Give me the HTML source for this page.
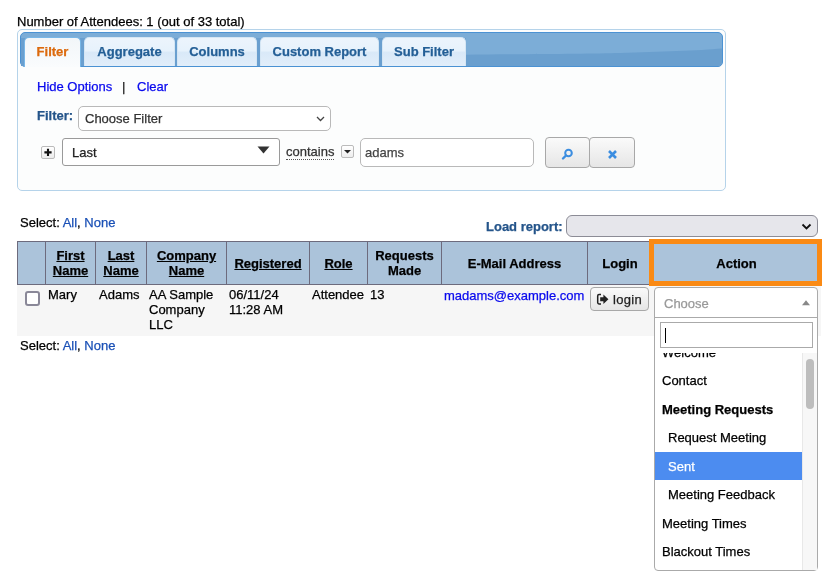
<!DOCTYPE html>
<html><head><meta charset="utf-8">
<style>
*{box-sizing:border-box}
html,body{margin:0;padding:0;background:#fff;width:839px;height:588px;overflow:hidden}
body{font-family:"Liberation Sans",sans-serif;font-size:13px;color:#000;position:relative;-webkit-text-stroke:0.25px currentColor}
.a{position:absolute}
.t{position:absolute;line-height:15px;white-space:nowrap}
.b{font-weight:bold}
/* widget */
#panel{left:17px;top:29px;width:709px;height:162px;border:1px solid #b5d3ea;border-radius:5px;background:#fcfdfd}
#hdr{left:20px;top:32px;width:703px;height:35px;border:1px solid #4b92d3;border-radius:5px;overflow:hidden;
 background:#7cadd7}
.tab{position:absolute;top:37px;height:29px;border:1px solid #d5e6f4;border-bottom:0;border-radius:5px 5px 0 0;
 background:linear-gradient(#ecf4fc 0%,#e7f2fc 45%,#d9e9f8 52%,#e2eefa 100%);color:#245f96;font-weight:bold;text-align:center;line-height:15px;padding-top:6px;
 box-shadow:inset 0 0 0 0 #fff}
.tab.act{background:#f5f8f9;border-color:#79b7e7;color:#dc6a0c;height:30px;background:linear-gradient(#f2f6f9,#fafcfd)}
a,.lnk{color:#0a0aee;text-decoration:none}
.lbl{color:#24548a;font-weight:bold}
.sel{position:absolute;border:1px solid #b9b9b9;border-radius:5px;background:#fff}
.btn{position:absolute;border:1px solid #a8a8a8;border-radius:4px;background:linear-gradient(#fafafa,#e6e6e6)}
/* table */
#th{left:17px;top:241px;width:804px;height:44px;background:#abc3da;border:1px solid #6d6b7d}
.vl{position:absolute;top:241px;width:1px;height:44px;background:#6d6b7d}
.hc{position:absolute;font-weight:bold;text-align:center;line-height:15px;white-space:nowrap}
.hc u{text-decoration:underline}
#row{left:17px;top:285px;width:804px;height:51px;background:#f6f6f6}
</style></head><body><div id="wrap" style="position:absolute;left:0;top:0;width:839px;height:588px;background:#fff;will-change:transform">

<div class="t" style="left:17px;top:14px">Number of Attendees: 1 (out of 33 total)</div>

<div id="panel" class="a"></div>
<div id="hdr" class="a"><svg style="position:absolute;left:-1px;top:-1px" width="703" height="35" viewBox="0 0 703 35"><path d="M0 23.5 L446 22.7 C520 22 570 21.8 600 21 C640 20 680 18.5 703 16.5 V35 H0 Z" fill="#6a9fce"/></svg></div>
<div class="a" style="left:21px;top:38px;width:445px;height:28px;background:#6a9fcf"></div>
<div class="tab act" style="left:24px;width:57px">Filter</div>
<div class="tab" style="left:84px;width:91px">Aggregate</div>
<div class="tab" style="left:177px;width:80px">Columns</div>
<div class="tab" style="left:260px;width:119px">Custom Report</div>
<div class="tab" style="left:382px;width:84px">Sub Filter</div>

<div class="t" style="left:37px;top:79px"><span class="lnk">Hide Options</span></div>
<div class="t" style="left:122px;top:79px;color:#222">|</div>
<div class="t" style="left:137px;top:79px"><span class="lnk">Clear</span></div>

<div class="t lbl" style="left:37px;top:108px">Filter:</div>
<div class="sel" style="left:78px;top:106px;width:253px;height:25px"></div>
<div class="t" style="left:85px;top:111px;color:#333">Choose Filter</div>
<svg class="a" style="left:316px;top:116px" width="9" height="6" viewBox="0 0 9 6"><path d="M1 1 L4.5 4.5 L8 1" fill="none" stroke="#444" stroke-width="1.3"/></svg>

<div class="a" style="left:41px;top:146px;width:14px;height:13px;border:1px solid #bbb;border-radius:2px;background:linear-gradient(#fff,#ececec)"></div>
<svg class="a" style="left:41px;top:146px" width="14" height="13" viewBox="0 0 14 13"><path d="M7 2.8 V10 M3.4 6.4 H10.6" stroke="#111" stroke-width="2.1"/></svg>

<div class="sel" style="left:62px;top:138px;width:218px;height:28px;border-radius:3px;border-color:#9a9a9a"></div>
<div class="t" style="left:72px;top:145px;color:#222">Last</div>
<svg class="a" style="left:257px;top:146px" width="13" height="8" viewBox="0 0 13 8"><path d="M0.5 0.5 H12.5 L6.5 7.5 Z" fill="#333"/></svg>

<div class="t" style="left:286px;top:144px;color:#333">contains</div>
<div class="a" style="left:286px;top:159px;width:48px;height:0;border-top:1px dotted #555"></div>
<div class="a" style="left:341px;top:145px;width:13px;height:13px;border:1px solid #bbb;border-radius:2px;background:linear-gradient(#fff,#eee)"></div>
<svg class="a" style="left:341px;top:145px" width="13" height="13" viewBox="0 0 13 13"><path d="M3 5 H10 L6.5 8.5 Z" fill="#222"/></svg>

<div class="sel" style="left:360px;top:138px;width:174px;height:29px;border-radius:5px"></div>
<div class="t" style="left:365px;top:145px;color:#444">adams</div>

<div class="btn" style="left:545px;top:137px;width:45px;height:31px"></div>
<div class="btn" style="left:589px;top:137px;width:46px;height:31px"></div>
<svg class="a" style="left:560px;top:147px" width="14" height="14" viewBox="0 0 14 14"><circle cx="8.5" cy="6" r="3.3" fill="none" stroke="#3b8de0" stroke-width="2"/><path d="M6 8.5 L3 11.5" stroke="#3b8de0" stroke-width="2.4" stroke-linecap="round"/></svg>
<svg class="a" style="left:606px;top:148px" width="13" height="13" viewBox="0 0 13 13"><path d="M3 3 L10 10 M10 3 L3 10" stroke="#3b8de0" stroke-width="2.6"/></svg>

<div class="t" style="left:20px;top:215px">Select: <span style="color:#1a50b6">All</span>, <span style="color:#1a50b6">None</span></div>

<div class="t lbl" style="left:486px;top:219px">Load report:</div>
<div class="sel" style="left:566px;top:215px;width:252px;height:22px;background:#e6e6eb;border-color:#8c8c96;border-radius:6px"></div>
<svg class="a" style="left:801px;top:223px" width="11" height="8" viewBox="0 0 11 8"><path d="M1.5 1.5 L5.5 5.5 L9.5 1.5" fill="none" stroke="#111" stroke-width="1.8"/></svg>

<!-- table header -->
<div id="th" class="a"></div>
<div class="vl" style="left:45px"></div>
<div class="vl" style="left:95px"></div>
<div class="vl" style="left:146px"></div>
<div class="vl" style="left:226px"></div>
<div class="vl" style="left:309px"></div>
<div class="vl" style="left:367px"></div>
<div class="vl" style="left:441px"></div>
<div class="vl" style="left:587px"></div>
<div class="vl" style="left:652px"></div>

<div class="hc" style="left:46px;width:49px;top:248px"><u>First</u><br><u>Name</u></div>
<div class="hc" style="left:96px;width:50px;top:248px"><u>Last</u><br><u>Name</u></div>
<div class="hc" style="left:147px;width:79px;top:248px"><u>Company</u><br><u>Name</u></div>
<div class="hc" style="left:227px;width:82px;top:256px"><u>Registered</u></div>
<div class="hc" style="left:310px;width:57px;top:256px"><u>Role</u></div>
<div class="hc" style="left:368px;width:73px;top:248px">Requests<br>Made</div>
<div class="hc" style="left:442px;width:145px;top:256px">E-Mail Address</div>
<div class="hc" style="left:588px;width:64px;top:256px">Login</div>
<div class="hc" style="left:653px;width:167px;top:256px">Action</div>

<!-- row -->
<div id="row" class="a"></div>
<div class="a" style="left:25px;top:291px;width:15px;height:15px;border:2px solid #8a8898;border-radius:3px;background:#fff"></div>
<div class="t" style="left:48px;top:287px">Mary</div>
<div class="t" style="left:99px;top:287px">Adams</div>
<div class="t" style="left:149px;top:287px">AA Sample<br>Company<br>LLC</div>
<div class="t" style="left:229px;top:287px">06/11/24<br>11:28 AM</div>
<div class="t" style="left:312px;top:287px">Attendee</div>
<div class="t" style="left:370px;top:287px">13</div>
<div class="t" style="left:444px;top:288px"><span class="lnk">madams@example.com</span></div>
<div class="btn" style="left:590px;top:287px;width:59px;height:24px;border-radius:4px"></div>
<svg class="a" style="left:596px;top:293px" width="14" height="13" viewBox="0 0 14 13"><path d="M5 1.6 H3 Q1.7 1.6 1.7 3 V9.6 Q1.7 11 3 11 H5" fill="none" stroke="#222" stroke-width="1.5"/><path d="M4.2 4.3 H7.4 V1.5 L12.4 6.3 L7.4 11.1 V8.3 H4.2 Z" fill="#222"/></svg>
<div class="t" style="left:613px;top:292px;color:#222;letter-spacing:0.3px">login</div>

<div class="t" style="left:20px;top:338px">Select: <span style="color:#1a50b6">All</span>, <span style="color:#1a50b6">None</span></div>

<!-- orange highlight -->
<div class="a" style="left:649px;top:239px;width:173px;height:47px;border:5px solid #fa8a14"></div>

<!-- select2 -->
<div class="a" style="left:654px;top:287px;width:164px;height:284px;border:1px solid #aaa;border-radius:4px;background:#fff"></div>
<div class="a" style="left:655px;top:317px;width:162px;height:1px;background:#aaa"></div>
<div class="t" style="left:664px;top:296px;color:#999">Choose</div>
<svg class="a" style="left:801px;top:299px" width="10" height="7" viewBox="0 0 10 7"><path d="M1 6.2 L5 1.2 L9 6.2 Z" fill="#888"/></svg>
<div class="a" style="left:660px;top:322px;width:153px;height:26px;border:1px solid #aaa;background:#fff"></div>
<div class="a" style="left:665px;top:328px;width:1px;height:15px;background:#000"></div>

<div class="a" style="left:655px;top:353px;width:162px;height:217px;overflow:hidden">
  <div class="a" style="left:147px;top:0px;width:15px;height:217px;background:#f7f7f7;border-left:1px solid #e8e8e8"></div>
  <div class="a" style="left:151px;top:6px;width:8px;height:50px;background:#bdbdbd;border-radius:4px"></div>
  <div class="a" style="left:0;top:99px;width:147px;height:28px;background:#4c8cf0"></div>
  <div class="t" style="left:7px;top:-8px">Welcome</div>
  <div class="t" style="left:7px;top:20px">Contact</div>
  <div class="t b" style="left:7px;top:49px">Meeting Requests</div>
  <div class="t" style="left:13px;top:77px">Request Meeting</div>
  <div class="t" style="left:13px;top:106px;color:#fff">Sent</div>
  <div class="t" style="left:13px;top:134px">Meeting Feedback</div>
  <div class="t" style="left:7px;top:163px">Meeting Times</div>
  <div class="t" style="left:7px;top:191px">Blackout Times</div>
</div>

</div></body></html>
